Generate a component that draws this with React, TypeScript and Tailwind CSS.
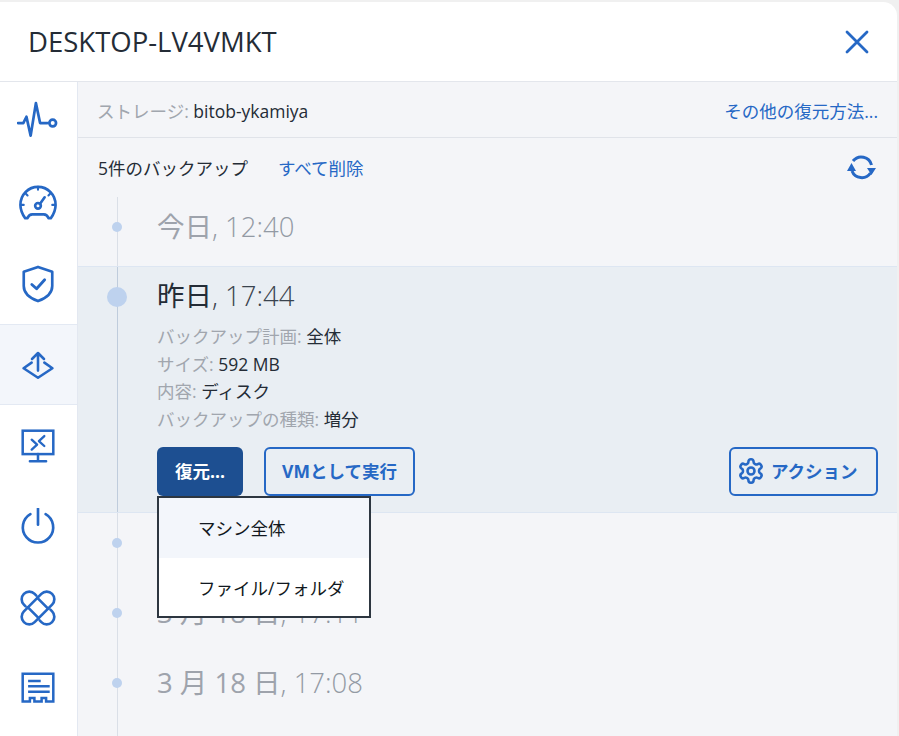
const font = { fontFamily: '"Open Sans", "Noto Sans CJK JP", sans-serif' };

const blue = "#2668c5";

function Icon({ children, size = 36 }: { children: React.ReactNode; size?: number }) {
  return (
    <svg width={size} height={size} viewBox="0 0 40 40" fill="none" stroke={blue} strokeWidth="2.8" strokeLinecap="round" strokeLinejoin="round">
      {children}
    </svg>
  );
}

const navIcons = [
  <Icon key="pulse" size={42}>
    <path d="M1 21h5l3-6 4 18 5-31 4 19h7" strokeWidth="2.6" />
    <circle cx="34" cy="21" r="3.2" strokeWidth="2.6" />
  </Icon>,
  <Icon key="gauge" size={38}>
    <path d="M9 36H6.500C3 31 1.500 27 1.500 22 1.500 11 10 3 20 3s18.500 8 18.500 19c0 5-1.500 9-5 14H31c-1-3-3-4-5-4H14c-2 0-4 1-5 4z" />
    <circle cx="20" cy="23" r="3" />
    <path d="M22 21l5-7" />
    <path d="M20 3v3M7 10l2 2M33 10l-2 2M2 22h3M38 22h-3" strokeWidth="2.200" />
  </Icon>,
  <Icon key="shield" size={38}>
    <path d="M20 2l15 5v15c0 8-7 13-15 16C12 35 5 30 5 22V7z" />
    <path d="M13.500 20.500l5 4.500 8.500-9.500" strokeWidth="3" />
  </Icon>,
  <Icon key="recovery" size={32}>
    <path d="M20 27V6M12.500 12.500L20 5l7.500 7.500" strokeWidth="3.200" />
    <path d="M12 17l-10 7 18 12 18-12-10-7" strokeWidth="3.200" />
  </Icon>,
  <Icon key="desktop" size={36}>
    <rect x="3" y="3" width="34" height="26" strokeLinejoin="miter" />
    <path d="M20 29v7M11 37h18" />
    <path d="M13 13l6 5.500-6 5.500M27 9l-6 5.500 6 5.500" strokeWidth="2.600" />
  </Icon>,
  <Icon key="power" size={38}>
    <path d="M12 6.500A16 16 0 1 0 28 6.500" />
    <path d="M20 0.500v17" />
  </Icon>,
  <Icon key="patch" size={38}>
    <g transform="rotate(45 20 20)">
      <rect x="12" y="-1" width="16" height="42" rx="8" />
      <path d="M12 13h16M12 27h16" />
    </g>
    <g transform="rotate(-45 20 20)">
      <path d="M12 9.500V7a8 8 0 0 1 16 0v2.500M12 30.500V33a8 8 0 0 0 16 0v-2.500" />
    </g>
  </Icon>,
  <Icon key="report" size={36}>
    <path d="M3 34V3h34v31h-8v-4h-5v4h-8v-4h-5v4z" strokeLinecap="butt" strokeLinejoin="miter" />
    <path d="M9 11h14M9 17h24M9 23h24" strokeLinecap="butt" />
  </Icon>,
];

function TimelineRow({ date, time, height = 70 }: { date: string; time: string; height?: number }) {
  return (
    <div className="relative pl-[79px]" style={{ height }}>
      <span className="absolute left-[34px] top-[25px] h-[10px] w-[10px] rounded-full bg-[#bed2ee]" />
      <div className="text-[27.5px] leading-[60px] text-[#9ea3ac]">
        {date}
        <span className="font-light text-[#939aa4]">, {time}</span>
      </div>
    </div>
  );
}

function Detail({ label, value }: { label: string; value: string }) {
  return (
    <div className="h-[27.7px] text-[17.5px] leading-[27.7px] text-[#a1a6ae]">
      {label}: <span className="text-[#242c36]">{value}</span>
    </div>
  );
}

export default function App() {
  return (
    <div className="h-[736px] w-[899px] overflow-hidden bg-[#f0f0f0] pr-[2px] pt-[2px]" style={font}>
      <div className="flex h-[734px] flex-col overflow-hidden rounded-tr-[14px] bg-white">
        <header className="flex h-[80px] shrink-0 items-center justify-between border-b border-[#e3e6ec] pl-[28px] pr-[27px]">
          <h1 className="text-[27.5px] font-normal leading-none text-[#242c36]">DESKTOP-LV4VMKT</h1>
          <svg width="26" height="26" viewBox="0 0 26 26" fill="none" stroke={blue} strokeWidth="2.800" strokeLinecap="round">
            <path d="M3 3l20 20M23 3L3 23" />
          </svg>
        </header>

        <div className="flex min-h-0 flex-1">
          <nav className="w-[78px] shrink-0 border-r border-[#e3e8f1] bg-white">
            <div className="-mt-px">
              {navIcons.map((icon, i) => (
                <div
                  key={i}
                  className={
                    i === 3
                      ? "flex h-[81px] items-center justify-center border-y border-[#e3e9f3] bg-[#f3f6fb] pr-[2px]"
                      : "flex h-[81px] items-center justify-center pr-[2px]"
                  }
                >
                  {icon}
                </div>
              ))}
            </div>
          </nav>

          <main className="relative min-w-0 flex-1 bg-[#f4f5f8]">
            <div className="flex h-[56px] items-center justify-between border-b border-[#e0e3e9] pl-[19px] pr-[19px] pt-[3px] text-[17.5px]">
              <div className="text-[#a1a6ae]">
                ストレージ: <span className="text-[#242c36]">bitob-ykamiya</span>
              </div>
              <a className="text-[#2668c5]">その他の復元方法...</a>
            </div>

            <div className="flex h-[59px] items-center justify-between pl-[20px] pr-[20px] text-[17.5px]">
              <div className="mt-[1px] flex gap-[30px]">
                <span className="text-[#242c36]">5件のバックアップ</span>
                <a className="text-[#2668c5]">すべて削除</a>
              </div>
              <svg width="30" height="30" viewBox="0 0 30 30" fill="none">
                <path d="M6 8A10.500 10.500 0 0 1 24.500 12M23.500 20A10.500 10.500 0 0 1 5 18" stroke={blue} strokeWidth="3" />
                <path d="M0 18h9l-4.500-8zM20 15h9l-4.500 7z" fill={blue} />
              </svg>
            </div>

            <div className="relative">
              <div className="absolute bottom-[-200px] left-[39px] top-0 w-px bg-[#dadfe7]" />
              <TimelineRow date="今日" time="12:40" height={69} />

              <section className="relative h-[247px] border-y border-[#dde6f2] bg-[#e9eef3] pl-[79px] pr-[19px] pt-[12px]">
                <div className="absolute bottom-0 left-[39px] top-0 w-px bg-[#bfccdc]" />
                <span className="absolute left-[29px] top-[20px] h-[20px] w-[20px] rounded-full bg-[#bed2ee]" />
                <div className="h-[34px] text-[27.5px] leading-[34px] text-[#242c36]">
                  昨日<span className="font-light text-[#3a434e]">, 17:44</span>
                </div>
                <div className="mt-[10px]">
                  <Detail label="バックアップ計画" value="全体" />
                  <Detail label="サイズ" value="592 MB" />
                  <Detail label="内容" value="ディスク" />
                  <Detail label="バックアップの種類" value="増分" />
                </div>
                <div className="mt-[13px] flex items-start">
                  <div className="relative">
                    <button className="flex h-[49px] w-[86px] items-center justify-center rounded-[6px] bg-[#1d4f91] text-[17.5px] font-bold text-white">
                      復元...
                    </button>
                    <div className="absolute left-0 top-[49px] z-10 w-[214px] border-2 border-[#2d3640] bg-white text-[17.5px] text-[#111820]">
                      <div className="flex h-[60px] items-center bg-[#f3f6fb] pl-[39px]">マシン全体</div>
                      <div className="flex h-[58px] items-center pl-[39px] pt-[2px]">ファイル/フォルダ</div>
                    </div>
                  </div>
                  <button className="ml-[21px] flex h-[49px] w-[151px] items-center justify-center rounded-[6px] border-2 border-[#2668c5] text-[17.5px] font-bold text-[#2668c5]">
                    VMとして実行
                  </button>
                  <button className="ml-auto flex h-[49px] w-[149px] items-center justify-start gap-[6px] rounded-[6px] border-2 border-[#2668c5] pl-[6px] text-[17.5px] font-bold text-[#2668c5]">
                    <svg width="28" height="28" viewBox="0 0 24 24" fill="none" stroke={blue} strokeWidth="2.200" strokeLinecap="round" strokeLinejoin="round">
                      <path d="M12.220 2h-.440a2 2 0 0 0-2 2v.180a2 2 0 0 1-1 1.730l-.430.250a2 2 0 0 1-2 0l-.150-.080a2 2 0 0 0-2.730.730l-.220.380a2 2 0 0 0 .730 2.730l.150.100a2 2 0 0 1 1 1.720v.510a2 2 0 0 1-1 1.740l-.150.090a2 2 0 0 0-.730 2.730l.220.380a2 2 0 0 0 2.730.730l.150-.080a2 2 0 0 1 2 0l.430.250a2 2 0 0 1 1 1.730V20a2 2 0 0 0 2 2h.440a2 2 0 0 0 2-2v-.180a2 2 0 0 1 1-1.730l.430-.250a2 2 0 0 1 2 0l.150.080a2 2 0 0 0 2.730-.730l.220-.390a2 2 0 0 0-.730-2.730l-.150-.080a2 2 0 0 1-1-1.740v-.500a2 2 0 0 1 1-1.740l.150-.090a2 2 0 0 0 .730-2.730l-.220-.380a2 2 0 0 0-2.730-.730l-.150.080a2 2 0 0 1-2 0l-.430-.250a2 2 0 0 1-1-1.730V4a2 2 0 0 0-2-2z" />
                      <circle cx="12" cy="12" r="3" />
                    </svg>
                    アクション
                  </button>
                </div>
              </section>

              <TimelineRow date="3 月 18 日" time="17:14" />
              <TimelineRow date="3 月 18 日" time="17:11" />
              <TimelineRow date="3 月 18 日" time="17:08" />
            </div>
          </main>
        </div>
      </div>
    </div>
  );
}
